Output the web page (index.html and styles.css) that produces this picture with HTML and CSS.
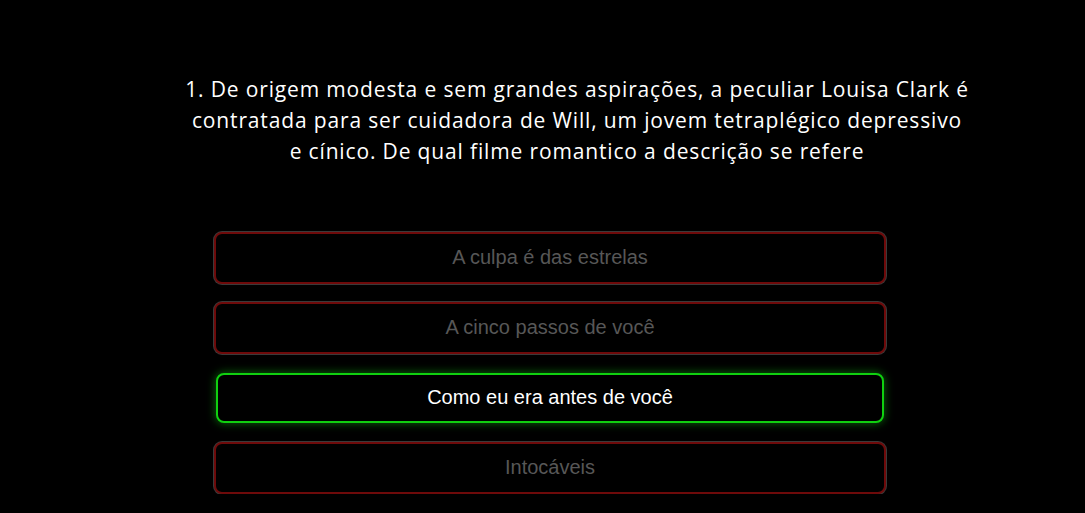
FILE: index.html
```html
<!DOCTYPE html>
<html lang="pt-BR">
<head>
<meta charset="utf-8">
<title>Quiz</title>
<link rel="stylesheet" href="styles.css">
</head>
<body>
<main class="quiz">
  <h1 class="question">1. De origem modesta e sem grandes aspirações, a peculiar Louisa Clark é contratada para ser cuidadora de Will, um jovem tetraplégico depressivo e cínico. De qual filme romantico a descrição se refere</h1>
  <div class="options">
    <button class="option dim">A culpa é das estrelas</button>
    <button class="option dim">A cinco passos de você</button>
    <button class="option correct">Como eu era antes de você</button>
    <button class="option dim">Intocáveis</button>
  </div>
</main>
</body>
</html>
```
FILE: styles.css
```css
html, body {
  margin: 0;
  background: #000;
}
.quiz {
  display: flex;
  flex-direction: column;
  align-items: center;
  padding-top: 74px;
}
.question {
  margin: 0 0 0 69px;
  width: 785px;
  color: #fff;
  font-family: "Open Sans", sans-serif;
  font-weight: 400;
  font-size: 21px;
  letter-spacing: 0.85px;
  line-height: 31px;
  text-align: center;
}
.options {
  margin: 65px 0 0 15px;
  width: 672px;
  display: flex;
  flex-direction: column;
  gap: 18px;
}
.option {
  height: 52px;
  padding-bottom: 2px;
  background: #000;
  border-radius: 8px;
  font-family: "Liberation Sans", Arial, sans-serif;
  font-size: 20px;
  text-align: center;
  cursor: pointer;
}
.option.dim {
  border: 2px solid #6e0a0a;
  box-shadow: 0 0 0 1px #3a3a3a;
  color: #575757;
}
.option.correct {
  margin: 1px 2px;
  height: 50px;
  border: 2px solid #10d010;
  box-shadow: 0 0 8px 1px rgba(20, 200, 20, 0.45);
  color: #fff;
}
```
